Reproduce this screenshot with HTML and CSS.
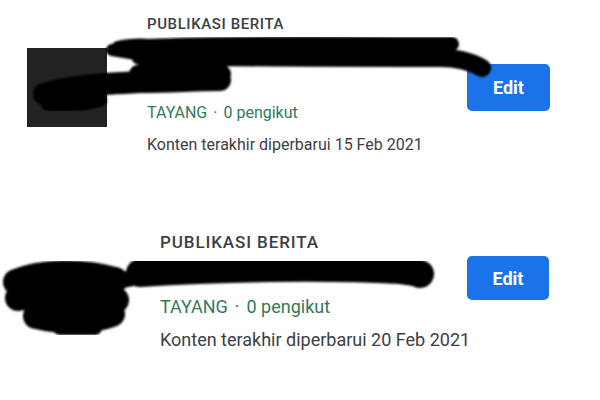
FILE: index.html
```html
<!DOCTYPE html>
<html lang="id">
<head>
  <meta charset="UTF-8">
  <meta name="viewport" content="width=device-width, initial-scale=1.0">
  <title>Publikasi Berita</title>
  <link rel="stylesheet" href="styles.css">
</head>
<body>
  <div class="list">
    <div class="item">
      <div class="thumb"></div>
      <div class="info">
        <div class="label">PUBLIKASI BERITA</div>
        <div class="title">Nama publikasi<br>Berita</div>
        <div class="status">TAYANG<span class="dot">·</span>0 pengikut</div>
        <div class="updated">Konten terakhir diperbarui 15 Feb 2021</div>
      </div>
      <button class="edit">Edit</button>
      <svg class="redact" viewBox="0 0 600 200" width="600" height="200">
        <g fill="none" stroke="#000" stroke-linecap="round" filter="url(#soft1)">
          <path d="M150 46 C230 42 330 44 452 44" stroke-width="14"/>
          <path d="M112 50 C150 56 180 62 205 68" stroke-width="12"/>
          <path d="M118 48 C130 45 140 45 152 46" stroke-width="14"/>
          <path d="M140 56 C250 58 380 58 440 58 C460 58 472 62 482 68" stroke-width="18"/>
          <path d="M138 74 C170 70 200 71 222 74" stroke-width="18"/>
          <path d="M44 94 C70 86 100 84 140 82 C170 82 195 80 220 80" stroke-width="22"/>
          <path d="M48 104 C70 106 85 104 100 100" stroke-width="14"/>
        </g>
        <defs>
          <filter id="soft1"><feGaussianBlur stdDeviation="1"/></filter>
        </defs>
      </svg>
    </div>

    <div class="item item--large">
      <div class="thumb thumb--empty"></div>
      <div class="info">
        <div class="label">PUBLIKASI BERITA</div>
        <div class="title">Nama publikasi</div>
        <div class="status">TAYANG<span class="dot">·</span>0 pengikut</div>
        <div class="updated">Konten terakhir diperbarui 20 Feb 2021</div>
      </div>
      <button class="edit">Edit</button>
      <svg class="redact" viewBox="0 0 600 200" width="600" height="200">
        <g fill="none" stroke="#000" stroke-linecap="round" filter="url(#soft2)">
          <path d="M140 73 C220 68 320 66 400 70 C410 71 416 72 420 74" stroke-width="28"/>
          <path d="M105 84 L142 76" stroke-width="16"/>
          <path d="M16 82 C40 72 80 70 115 80" stroke-width="26"/>
          <path d="M45 72 C55 68 65 68 78 72" stroke-width="14"/>
          <path d="M18 98 C50 93 90 95 116 100" stroke-width="26"/>
          <path d="M36 116 C60 122 90 122 112 114" stroke-width="26"/>
          <path d="M60 128 L95 128" stroke-width="14"/>
        </g>
        <defs>
          <filter id="soft2"><feGaussianBlur stdDeviation="1"/></filter>
        </defs>
      </svg>
    </div>
  </div>
</body>
</html>
```

FILE: styles.css
```css
body {
  margin: 0;
  background: #fff;
  font-family: Roboto, "Liberation Sans", Arial, sans-serif;
  color: #3c4043;
}

.item {
  position: relative;
  display: flex;
  align-items: flex-start;
  height: 200px;
  padding-left: 27px;
}

.thumb {
  width: 80px;
  height: 79px;
  margin-top: 48px;
  background: #222;
  flex-shrink: 0;
}

.thumb--empty {
  background: transparent;
}

.info {
  flex: 1;
  min-width: 0;
  margin-left: 40px;
  padding-top: 14px;
  white-space: nowrap;
}

.label {
  font-size: 15px;
  line-height: 20px;
  font-weight: 500;
  letter-spacing: 0.6px;
}

.title {
  margin-top: 4px;
  font-size: 16px;
  line-height: 28px;
  color: #202124;
}

.status {
  margin-top: 7px;
  font-size: 16px;
  line-height: 24px;
  color: #33795a;
}

.dot {
  margin: 0 6px;
}

.updated {
  margin-top: 8px;
  font-size: 16px;
  line-height: 24px;
}

.edit {
  margin-right: 50px;
  margin-top: 64px;
  width: 83px;
  height: 47px;
  flex-shrink: 0;
  border: none;
  border-radius: 5px;
  background: #1a73e8;
  color: #fff;
  font-family: Roboto, "Liberation Sans", Arial, sans-serif;
  font-size: 18px;
  font-weight: 700;
  cursor: pointer;
}

.redact {
  position: absolute;
  top: 0;
  left: 0;
  pointer-events: none;
}

.item--large .info {
  margin-left: 53px;
  padding-top: 31px;
}

.item--large .label {
  font-size: 17px;
  line-height: 23px;
  letter-spacing: 0.9px;
}

.item--large .title {
  line-height: 32px;
}

.item--large .status {
  margin-top: 4px;
  font-size: 18px;
  line-height: 26px;
}

.item--large .dot {
  margin: 0 7px;
}

.item--large .updated {
  margin-top: 7px;
  font-size: 18px;
  line-height: 26px;
}

.item--large .edit {
  margin-top: 56px;
  margin-right: 51px;
  width: 82px;
  height: 44px;
}
```
